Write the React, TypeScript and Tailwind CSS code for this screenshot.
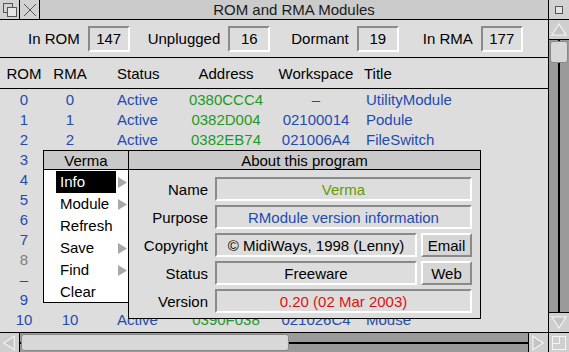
import React from "react";

type Row = {
  rom: string;
  rma: string;
  status: string;
  address: string;
  workspace: string;
  title: string;
  dim?: boolean;
};

// Cells covered by the menu and the About box are left blank
const rows: Row[] = [
  { rom: "0", rma: "0", status: "Active", address: "0380CCC4", workspace: "–", title: "UtilityModule" },
  { rom: "1", rma: "1", status: "Active", address: "0382D004", workspace: "02100014", title: "Podule" },
  { rom: "2", rma: "2", status: "Active", address: "0382EB74", workspace: "021006A4", title: "FileSwitch" },
  { rom: "3", rma: "", status: "", address: "", workspace: "", title: "" },
  { rom: "4", rma: "", status: "", address: "", workspace: "", title: "" },
  { rom: "5", rma: "", status: "", address: "", workspace: "", title: "" },
  { rom: "6", rma: "", status: "", address: "", workspace: "", title: "" },
  { rom: "7", rma: "", status: "", address: "", workspace: "", title: "" },
  { rom: "8", rma: "", status: "", address: "", workspace: "", title: "", dim: true },
  { rom: "–", rma: "", status: "", address: "", workspace: "", title: "" },
  { rom: "9", rma: "", status: "", address: "", workspace: "", title: "" },
  { rom: "10", rma: "10", status: "Active", address: "0390F038", workspace: "021026C4", title: "Mouse" },
];

const counters = [
  { label: "In ROM", value: "147", ml: "ml-[28px]" },
  { label: "Unplugged", value: "16", ml: "ml-[18px]" },
  { label: "Dormant", value: "19", ml: "ml-[21px]" },
  { label: "In RMA", value: "177", ml: "ml-[24px]" },
];

const menuItems = [
  { label: "Info", sub: true, selected: true },
  { label: "Module", sub: true },
  { label: "Refresh" },
  { label: "Save", sub: true },
  { label: "Find", sub: true },
  { label: "Clear" },
];

const Inset = ({ className, children }: { className: string; children?: React.ReactNode }) => (
  <div
    className={`flex items-center justify-center border-2 border-t-[#8a8a8a] border-l-[#8a8a8a] border-b-white border-r-white bg-[#dddddd] ${className}`}
  >
    {children}
  </div>
);

const Raised = ({ className, children }: { className: string; children?: React.ReactNode }) => (
  <div
    className={`flex items-center justify-center border-2 border-t-white border-l-white border-b-[#8a8a8a] border-r-[#8a8a8a] bg-[#d6d6d6] ${className}`}
  >
    {children}
  </div>
);

const Arrow = ({ dir }: { dir: "up" | "down" | "left" | "right" }) => {
  const pts = {
    up: "3,15 10,4 17,15",
    down: "3,4 10,15 17,4",
    left: "15,3 4,10 15,17",
    right: "4,3 15,10 4,17",
  }[dir];
  return (
    <svg width="20" height="19" viewBox="0 0 20 19">
      <polygon points={pts} fill="#c4c4c4" stroke="#f4f4f4" strokeWidth="1.2" />
    </svg>
  );
};

export default function App() {
  return (
    <div className="relative w-[569px] h-[352px] overflow-hidden bg-[#dddddd] font-['Liberation_Sans',Arial,sans-serif] text-[15px] leading-none text-black">
      {/* Title bar */}
      <div className="flex h-[20px] border-b border-black">
        <div className="flex w-[20px] items-center justify-center border-r border-black bg-[#d2d2d2]">
          <svg width="16" height="16" viewBox="0 0 16 16">
            <rect x="1.5" y="1.5" width="9" height="9" fill="#d2d2d2" stroke="#555" />
            <rect x="5.5" y="5.5" width="9" height="9" fill="#e6e6e6" stroke="#555" />
          </svg>
        </div>
        <div className="flex w-[20px] items-center justify-center border-r border-black bg-[#d2d2d2]">
          <svg width="14" height="14" viewBox="0 0 14 14">
            <path d="M1 1 L13 13 M13 1 L1 13" stroke="#555" strokeWidth="1" />
          </svg>
        </div>
        <div className="flex flex-1 items-center justify-center bg-[#cbcbcb] text-[#1a1a1a]">
          ROM and RMA Modules
        </div>
        <div className="flex w-[21px] items-center justify-center border-l border-black bg-[#d2d2d2]">
          <svg width="12" height="12" viewBox="0 0 12 12">
            <rect x="2.5" y="2.5" width="7" height="7" fill="#e4e4e4" stroke="#555" />
          </svg>
        </div>
      </div>

      {/* Main area */}
      <div className="flex h-[312px]">
        <div className="flex flex-1 flex-col overflow-hidden">
          {/* Toolbar */}
          <div className="flex h-[38px] shrink-0 items-center border-b border-black">
            {counters.map((c) => (
              <div key={c.label} className={`flex items-center ${c.ml}`}>
                <span>{c.label}</span>
                <Inset className="ml-[8px] h-[26px] w-[42px]">{c.value}</Inset>
              </div>
            ))}
          </div>

          {/* Column header */}
          <div className="flex h-[31px] shrink-0 items-center border-b border-black">
            <div className="w-[48px] text-center">ROM</div>
            <div className="w-[44px] text-center">RMA</div>
            <div className="w-[94px] pl-[25px]">Status</div>
            <div className="w-[80px] text-center">Address</div>
            <div className="w-[100px] text-center">Workspace</div>
            <div className="ml-[-2px]">Title</div>
          </div>

          {/* Rows */}
          <div>
            {rows.map((r, i) => (
              <div key={i} className="flex h-[20px] items-center text-[#1e4bb4]">
                <div className={`w-[48px] text-center ${r.dim ? "text-[#808080]" : ""}`}>{r.rom}</div>
                <div className="w-[44px] text-center">{r.rma}</div>
                <div className="w-[94px] pl-[25px]">{r.status}</div>
                <div className="w-[80px] text-center text-[#1d9a1d]">{r.address}</div>
                <div className="w-[100px] text-center">{r.workspace}</div>
                <div>{r.title}</div>
              </div>
            ))}
          </div>
        </div>

        {/* Vertical scrollbar */}
        <div className="flex w-[21px] flex-col border-l border-black">
          <div className="flex h-[20px] items-center justify-center border-b border-black bg-[#cfcfcf]">
            <Arrow dir="up" />
          </div>
          <div className="relative flex-1 bg-[#9a9a9a]">
            <div className="absolute left-[9px] top-0 bottom-0 w-[2px] bg-black" />
            <div className="absolute left-[1px] right-[1px] top-[1px] h-[22px] rounded-[3px] border border-[#888] bg-[#d8d8d8]" />
          </div>
          <div className="flex h-[20px] items-center justify-center border-t border-black bg-[#cfcfcf]">
            <Arrow dir="down" />
          </div>
        </div>
      </div>

      {/* Horizontal scrollbar */}
      <div className="flex h-[20px] border-t border-black">
        <div className="flex w-[20px] items-center justify-center border-r border-black bg-[#cfcfcf]">
          <Arrow dir="left" />
        </div>
        <div className="relative flex-1 bg-[#9a9a9a]">
          <div className="absolute top-[9px] left-0 right-0 h-[2px] bg-black" />
          <div className="absolute top-[1px] bottom-[1px] left-[1px] w-[268px] rounded-[3px] border border-[#888] bg-[#d8d8d8]" />
        </div>
        <div className="flex w-[20px] items-center justify-center border-l border-black bg-[#cfcfcf]">
          <Arrow dir="right" />
        </div>
        <div className="flex w-[21px] items-center justify-center border-l border-black bg-[#cfcfcf]">
          <svg width="16" height="16" viewBox="0 0 16 16">
            <rect x="1.5" y="1.5" width="13" height="13" fill="none" stroke="#f4f4f4" />
            <rect x="1.5" y="1.5" width="7" height="7" fill="none" stroke="#f4f4f4" />
          </svg>
        </div>
      </div>

      {/* Menu */}
      <div className="absolute left-[43px] top-[150px] w-[86px] h-[153px] border border-black bg-white">
        <div className="flex h-[19px] items-center justify-center border-b border-black bg-[#c9c9c9]">
          Verma
        </div>
        <div className="pt-[1px]">
          {menuItems.map((m) => (
            <div key={m.label} className="flex h-[22px] items-center">
              <div
                className={`ml-[12px] flex h-full w-[60px] items-center pl-[4px] pb-[2px] ${
                  m.selected ? "bg-black text-white" : ""
                }`}
              >
                {m.label}
              </div>
              {m.sub && (
                <svg className="ml-[2px]" width="9" height="11" viewBox="0 0 9 11">
                  <polygon points="0,0 9,5.5 0,11" fill="#a8a8a8" />
                </svg>
              )}
            </div>
          ))}
        </div>
      </div>

      {/* About dialog */}
      <div className="absolute left-[128px] top-[150px] w-[353px] h-[169px] border border-black bg-[#dddddd]">
        <div className="flex h-[19px] items-center justify-center border-b border-black bg-[#c9c9c9]">
          About this program
        </div>
        <div className="flex flex-col gap-[4px] pt-[7px]">
          <div className="flex items-center">
            <div className="w-[79px] text-right">Name</div>
            <Inset className="ml-[7px] h-[24px] w-[257px] text-[#5f9e00]">Verma</Inset>
          </div>
          <div className="flex items-center">
            <div className="w-[79px] text-right">Purpose</div>
            <Inset className="ml-[7px] h-[24px] w-[257px] text-[#1e4bb4]">RModule version information</Inset>
          </div>
          <div className="flex items-center">
            <div className="w-[79px] text-right">Copyright</div>
            <Inset className="ml-[7px] h-[24px] w-[202px]">© MidiWays, 1998 (Lenny)</Inset>
            <Raised className="ml-[4px] h-[24px] w-[51px]">Email</Raised>
          </div>
          <div className="flex items-center">
            <div className="w-[79px] text-right">Status</div>
            <Inset className="ml-[7px] h-[24px] w-[202px]">Freeware</Inset>
            <Raised className="ml-[4px] h-[24px] w-[51px]">Web</Raised>
          </div>
          <div className="flex items-center">
            <div className="w-[79px] text-right">Version</div>
            <Inset className="ml-[7px] h-[24px] w-[257px] text-[#e01010]">0.20 (02 Mar 2003)</Inset>
          </div>
        </div>
      </div>
    </div>
  );
}
